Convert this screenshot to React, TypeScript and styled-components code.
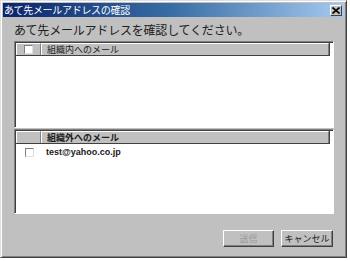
import React from "react";
import styled, { createGlobalStyle } from "styled-components";

const Global = createGlobalStyle`
  html, body { margin: 0; padding: 0; background: #ffffff; }
  body { font-family: "Noto Sans CJK JP", "Liberation Sans", sans-serif; }
`;

const Window = styled.div`
  width: 347px;
  height: 258px;
  box-sizing: border-box;
  background: #c0c0c0;
  border-top: 1px solid #dfdfdf;
  border-left: 1px solid #dfdfdf;
  border-right: 1px solid #404040;
  border-bottom: 1px solid #404040;
  box-shadow: inset 1px 1px 0 #ffffff, inset -1px -1px 0 #808080;
  padding: 2px;
  display: flex;
  flex-direction: column;
`;

const TitleBar = styled.div`
  height: 14px;
  background: linear-gradient(to right, #0a246a 0%, #3a6ea5 50%, #a6caf0 100%);
  display: flex;
  align-items: center;
  justify-content: space-between;
  padding: 0 2px 0 1px;
`;

const Title = styled.span`
  color: #ffffff;
  font-size: 10px;
  line-height: 14px;
  letter-spacing: -0.3px;
`;

const CloseButton = styled.div`
  width: 12px;
  height: 11px;
  box-sizing: border-box;
  background: #c0c0c0;
  border-top: 1px solid #ffffff;
  border-left: 1px solid #ffffff;
  border-right: 1px solid #404040;
  border-bottom: 1px solid #404040;
  display: flex;
  align-items: center;
  justify-content: center;
`;

const Body = styled.div`
  flex: 1;
  display: flex;
  flex-direction: column;
  padding: 5px 10px 0 11px;
`;

const Heading = styled.div`
  font-size: 12px;
  line-height: 16px;
  color: #202020;
  margin-bottom: 3px;
  letter-spacing: -0.2px;
`;

const Panel = styled.div<{ $h: number }>`
  height: ${(p) => p.$h}px;
  box-sizing: border-box;
  background: #ffffff;
  border-top: 1px solid #808080;
  border-left: 1px solid #808080;
  border-right: 1px solid #ffffff;
  border-bottom: 1px solid #ffffff;
  box-shadow: inset 1px 1px 0 #404040;
  padding: 1px 3px 0 1px;
  display: flex;
  flex-direction: column;
`;

const Header = styled.div`
  height: 12px;
  display: flex;
  background: #c0c0c0;
  border-right: 1px solid #404040;
  border-bottom: 1px solid #404040;
  box-sizing: content-box;
`;

const HeaderCell = styled.div<{ $w?: number; $bold?: boolean }>`
  ${(p) => (p.$w ? `width: ${p.$w}px;` : "flex: 1;")}
  box-sizing: border-box;
  border-top: 1px solid #ffffff;
  border-left: 1px solid #ffffff;
  border-right: 1px solid #808080;
  display: flex;
  align-items: center;
  padding-left: ${(p) => (p.$w ? 0 : 5)}px;
  justify-content: ${(p) => (p.$w ? "center" : "flex-start")};
  font-size: 9px;
  font-weight: ${(p) => (p.$bold ? 700 : 400)};
  color: #202020;
  line-height: 11px;
`;

const Check = styled.div`
  width: 9px;
  height: 9px;
  box-sizing: border-box;
  background: #ffffff;
  border-top: 1px solid #808080;
  border-left: 1px solid #808080;
  border-right: 1px solid #e0e0e0;
  border-bottom: 1px solid #e0e0e0;
`;

const Row = styled.div`
  height: 14px;
  display: flex;
  align-items: center;
  margin-top: 1px;
`;

const RowCheckCell = styled.div`
  width: 27px;
  display: flex;
  justify-content: center;
`;

const Email = styled.span`
  font-family: "Liberation Sans", Arial, sans-serif;
  font-size: 9px;
  font-weight: 700;
  color: #202020;
  padding-left: 3px;
`;

const Gap = styled.div`
  height: 1px;
`;

const Footer = styled.div`
  display: flex;
  justify-content: flex-end;
  gap: 7px;
  padding-top: 16px;
  padding-right: 1px;
`;

const Button = styled.button<{ $w: number; $disabled?: boolean }>`
  width: ${(p) => p.$w}px;
  height: 17px;
  box-sizing: border-box;
  background: #c0c0c0;
  border-top: 1px solid #ffffff;
  border-left: 1px solid #ffffff;
  border-right: 1px solid #404040;
  border-bottom: 1px solid #404040;
  box-shadow: inset -1px -1px 0 #808080;
  padding: 0;
  margin: 0;
  font-family: "Noto Sans CJK JP", sans-serif;
  font-size: 9px;
  line-height: 13px;
  color: ${(p) => (p.$disabled ? "#9a9a9a" : "#202020")};
`;

export default function App() {
  return (
    <>
      <Global />
      <Window>
        <TitleBar>
          <Title>あて先メールアドレスの確認</Title>
          <CloseButton>
            <svg width="8" height="7" viewBox="0 0 8 7">
              <path d="M0.5 0.5 L7.5 6.5 M7.5 0.5 L0.5 6.5" stroke="#000" strokeWidth="1.6" />
            </svg>
          </CloseButton>
        </TitleBar>
        <Body>
          <Heading>あて先メールアドレスを確認してください。</Heading>
          <Panel $h={87}>
            <Header>
              <HeaderCell $w={25}>
                <Check />
              </HeaderCell>
              <HeaderCell>組織内へのメール</HeaderCell>
            </Header>
          </Panel>
          <Gap />
          <Panel $h={85}>
            <Header>
              <HeaderCell $w={25} />
              <HeaderCell $bold>組織外へのメール</HeaderCell>
            </Header>
            <Row>
              <RowCheckCell>
                <Check />
              </RowCheckCell>
              <Email>test@yahoo.co.jp</Email>
            </Row>
          </Panel>
          <Footer>
            <Button $w={51} $disabled>送信</Button>
            <Button $w={52}>キャンセル</Button>
          </Footer>
        </Body>
      </Window>
    </>
  );
}
